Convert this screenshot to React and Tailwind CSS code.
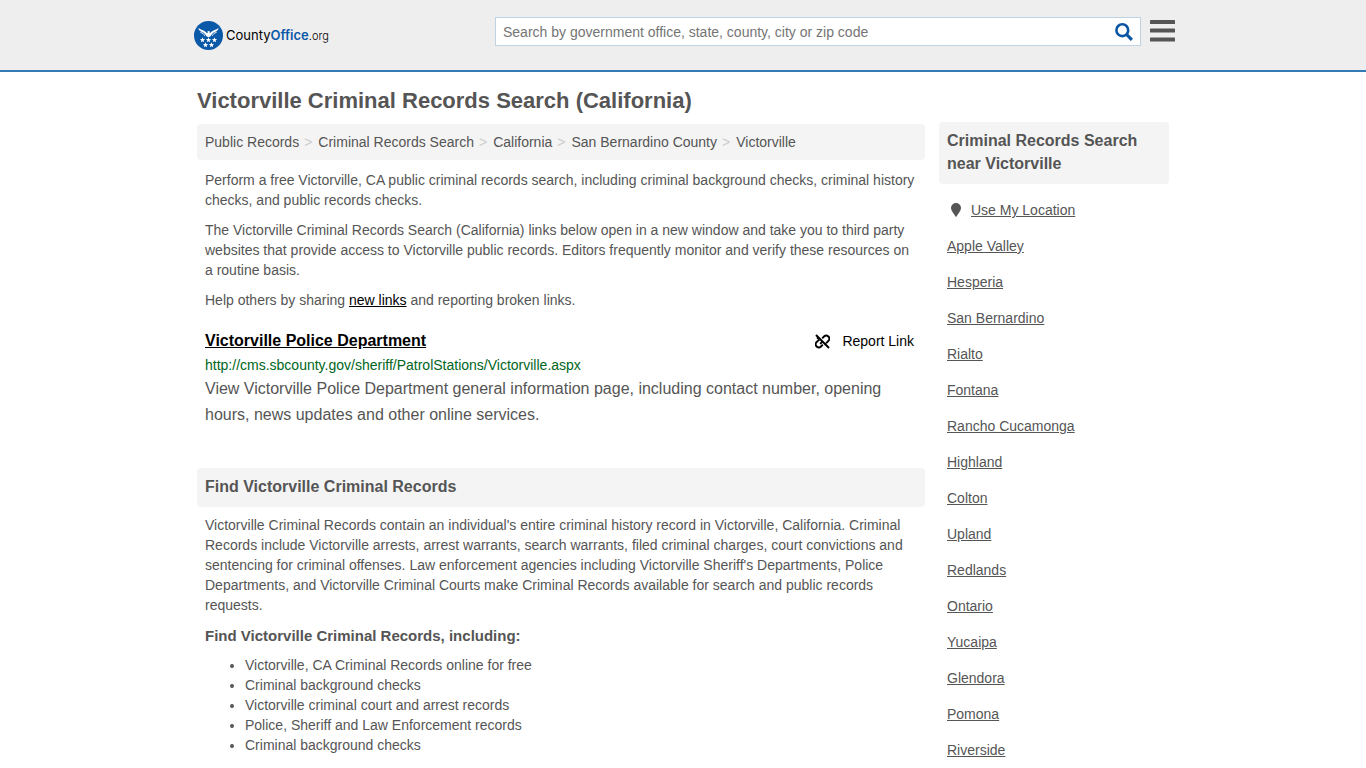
import { useState } from "react";

const crumbs = [
  "Public Records",
  "Criminal Records Search",
  "California",
  "San Bernardino County",
  "Victorville",
];

const cities = [
  "Apple Valley",
  "Hesperia",
  "San Bernardino",
  "Rialto",
  "Fontana",
  "Rancho Cucamonga",
  "Highland",
  "Colton",
  "Upland",
  "Redlands",
  "Ontario",
  "Yucaipa",
  "Glendora",
  "Pomona",
  "Riverside",
];

const records = [
  "Victorville, CA Criminal Records online for free",
  "Criminal background checks",
  "Victorville criminal court and arrest records",
  "Police, Sheriff and Law Enforcement records",
  "Criminal background checks",
];

const Star = ({ x, y }) => (
  <path
    transform={`translate(${x} ${y})`}
    d="M0-2.7.7-.9 2.6-.8 1.1.5 1.6 2.3 0 1.3-1.6 2.3-1.1.5-2.6-.8-.7-.9Z"
  />
);

const Logo = () => (
  <a href="#" className="flex items-center gap-[3px]">
    <svg viewBox="0 0 29 29" className="size-[29px]" fill="#fff" aria-hidden="true">
      <circle cx="14.5" cy="14.5" r="14.5" fill="#0a58a8" />
      <path d="M4.5 6.8C6.5 9.2 10 8.8 13 12.3l.8-.6-.5-1.3 1.7-.5 1.2 1-.8.2.6 1.2C19 8.8 22.5 9.2 24.5 6.8c0 1.5-.5 2.5-1.6 3.2-1.9 1-3.5 1.2-5 3.3l-1.600 2.300-1.800.7-1.800-.7-1.600-2.300c-1.500-2.100-3.100-2.300-5-3.300C5 9.300 4.500 8.300 4.500 6.800Z" />
      <path
        d="M6.5 11.4c2 .5 3 1.200 4.200 3.300M22.500 11.400c-2 .5-3 1.200-4.200 3.300"
        fill="none"
        stroke="#fff"
        strokeWidth="1"
      />
      <Star x={8.5} y={19} />
      <Star x={14.5} y={19} />
      <Star x={20.5} y={19} />
      <Star x={11.5} y={24} />
      <Star x={17.5} y={24} />
    </svg>
    <span className="font-[Inter,sans-serif] text-[13px] leading-5 text-black">
      County<b className="font-semibold text-[#0a58a8]">Office</b>
      <span className="text-[11px] font-light text-black">.org</span>
    </span>
  </a>
);

const Header = () => {
  const [query, setQuery] = useState("");

  return (
    <header className="border-b-2 border-[#337ab7] bg-[#eee]">
      <div className="mx-auto flex h-[70px] max-w-[978px] items-center justify-between">
        <Logo />
        <div className="-mr-[3px] mb-2 flex items-center gap-[9px]">
          <form
            className="flex h-[29px] w-[646px] items-center border border-[#c0d3e3] bg-white"
            onSubmit={(e) => e.preventDefault()}
          >
            <input
              type="text"
              aria-label="Search"
              placeholder="Search by government office, state, county, city or zip code"
              className="min-w-0 flex-1 px-[7px] pt-px text-sm outline-none placeholder:text-[#757575]"
              value={query}
              onChange={(e) => setQuery(e.target.value)}
            />
            <button type="submit" aria-label="Submit search" className="px-[7px] pt-px">
              <svg viewBox="0 0 18 18" className="size-[18px]" fill="none" stroke="#0a55a3">
                <circle cx="7.3" cy="7.2" r="5.9" strokeWidth="2.6" />
                <path d="m11.6 11.5 5.3 5.4" strokeWidth="3.2" />
              </svg>
            </button>
          </form>
          <button type="button" aria-label="Menu">
            <svg viewBox="0 0 25 22" className="h-[22px] w-[25px]" fill="#555">
              <rect width="25" height="4" rx=".6" />
              <rect y="8.5" width="25" height="4" rx=".6" />
              <rect y="17.5" width="25" height="4" rx=".6" />
            </svg>
          </button>
        </div>
      </div>
    </header>
  );
};

const Listing = () => (
  <article className="mt-[21px] px-2">
    <div className="flex items-center justify-between pr-[3px]">
      <h2 className="text-base leading-5 font-bold">
        <a href="#" className="text-black underline">Victorville Police Department</a>
      </h2>
      <button type="button" className="flex items-center gap-3 text-sm leading-5 text-black">
        <svg viewBox="0 0 15 15" className="size-[15px]" fill="none" stroke="currentColor" strokeWidth="1.9">
          <path d="m1 1 13 13" />
          <path d="M7.200 4.300 9 2.500a3.050 3.050 0 0 1 4.400 4.300l-2.200 2.300" />
          <path d="M7.800 10.700 6 12.500a3.050 3.050 0 0 1-4.400-4.300l2.700-2.700" />
          <path d="M5.200 9.800l2.300-2.300M9.500 9.700l2 1M3.300 3.300 2 4.600" />
        </svg>
        Report Link
      </button>
    </div>
    <p className="mt-1 text-[#006621]">http://cms.sbcounty.gov/sheriff/PatrolStations/Victorville.aspx</p>
    <p className="mt-px text-base leading-[26px]">
      View Victorville Police Department general information page, including contact number, opening
      hours, news updates and other online services.
    </p>
  </article>
);

const Sidebar = () => (
  <aside className="w-[230px] shrink-0 pt-[35px]">
    <h2 className="rounded bg-[#f4f4f4] px-2 pt-[7px] pb-[9px] text-base leading-[23px] font-bold">
      Criminal Records Search near Victorville
    </h2>
    <ul className="mt-4 flex flex-col gap-4 px-2">
      <li className="flex items-center gap-[10px] pl-1">
        <svg viewBox="0 0 10 14" className="h-[14px] w-[10px]" fill="#555" aria-hidden="true">
          <path d="M5 0a5 5 0 0 1 5 5c0 3-3 5.5-4.3 8.3-.3.7-1.1.7-1.4 0C3 10.5 0 8 0 5a5 5 0 0 1 5-5Z" />
        </svg>
        <a href="#" className="underline">Use My Location</a>
      </li>
      {cities.map((city) => (
        <li key={city}>
          <a href="#" className="underline">{city}</a>
        </li>
      ))}
    </ul>
  </aside>
);

const App = () => {
  return (
    <div className="bg-white font-['Liberation_Sans',Arial,sans-serif] text-sm leading-5 text-[#555]">
      <Header />
      <div className="mx-auto flex max-w-[972px] gap-[14px] pt-[15px]">
        <main className="min-w-0 flex-1">
          <h1 className="text-[22px] leading-7 font-bold">Victorville Criminal Records Search (California)</h1>
          <nav aria-label="Breadcrumb" className="mt-[9px] rounded bg-[#f4f4f4] p-2">
            <ol className="flex">
              {crumbs.map((crumb, i) => (
                <li key={crumb}>
                  {i > 0 && <span className="pr-[6px] pl-[5px] text-[#ccc]">&gt;</span>}
                  <a href="#">{crumb}</a>
                </li>
              ))}
            </ol>
          </nav>
          <div className="mt-[10px] flex flex-col gap-[10px] px-2">
            <p>
              Perform a free Victorville, CA public criminal records search, including criminal background
              checks, criminal history checks, and public records checks.
            </p>
            <p>
              The Victorville Criminal Records Search (California) links below open in a new window and take
              you to third party websites that provide access to Victorville public records. Editors
              frequently monitor and verify these resources on a routine basis.
            </p>
            <p>
              Help others by sharing <a href="#" className="text-black underline">new links</a> and reporting
              broken links.
            </p>
          </div>
          <Listing />
          <section className="mt-10">
            <h2 className="rounded bg-[#f4f4f4] px-2 pt-[9px] pb-[10px] text-base leading-5 font-bold">
              Find Victorville Criminal Records
            </h2>
            <div className="px-2 pt-2">
              <p>
                Victorville Criminal Records contain an individual's entire criminal history record in
                Victorville, California. Criminal Records include Victorville arrests, arrest warrants,
                search warrants, filed criminal charges, court convictions and sentencing for criminal
                offenses. Law enforcement agencies including Victorville Sheriff's Departments, Police
                Departments, and Victorville Criminal Courts make Criminal Records available for search and
                public records requests.
              </p>
              <h3 className="mt-[11px] text-[15px] leading-5 font-bold">Find Victorville Criminal Records, including:</h3>
              <ul className="mt-[9px] list-disc pl-10">
                {records.map((record, i) => (
                  <li key={i}>{record}</li>
                ))}
              </ul>
            </div>
          </section>
        </main>
        <Sidebar />
      </div>
    </div>
  );
};

export default App;
